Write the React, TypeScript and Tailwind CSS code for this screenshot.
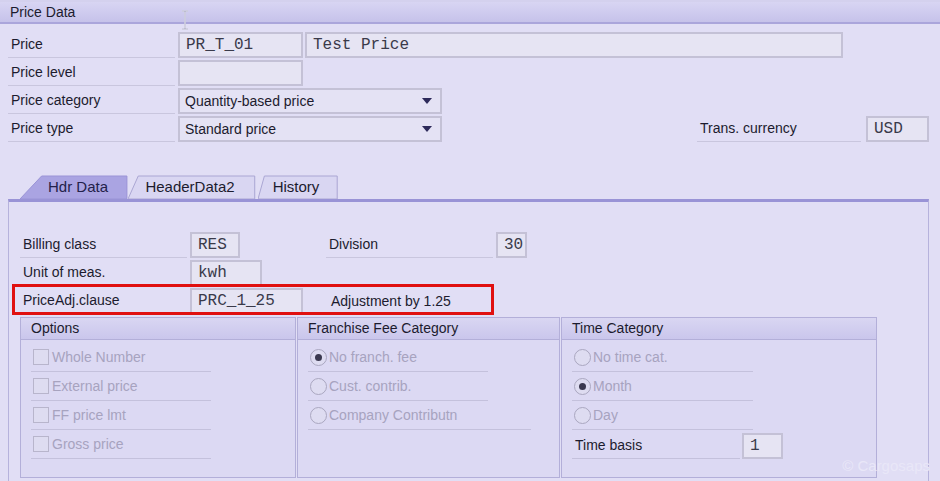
import React from 'react';

const label = 'text-[14px] text-[#1c1b2e]';
const dim = 'text-[14px] text-[#a7a3bf]';

function Box({ w, value, mono = true }: { w: string; value?: string; mono?: boolean }) {
  return (
    <div
      className={`${w} h-[26px] flex items-center px-[6px] bg-[#e6e4f3] border-2 border-[#c4c1d6] ${
        mono ? "font-['Liberation_Mono',monospace] text-[16px] text-[#3a3a4a]" : 'text-[14px] text-[#1c1b2e]'
      }`}
    >
      {value}
    </div>
  );
}

function Select({ value }: { value: string }) {
  return (
    <div className="w-[264px] h-[26px] flex items-center justify-between pl-[5px] pr-[7px] bg-[#e4e2f4] border-2 border-[#c4c1d6]">
      <span className="text-[14px] text-[#1c1b2e]">{value}</span>
      <svg width="12" height="8" viewBox="0 0 12 8">
        <path d="M1 1 L11 1 L6 7 Z" fill="#2d2a5a" />
      </svg>
    </div>
  );
}

function Row({ text, children, lw = 'w-[167px]' }: { text: string; children?: React.ReactNode; lw?: string }) {
  return (
    <div className="flex items-end h-[28px]">
      <div className={`${lw} h-[26px] flex items-center pl-[3px] border-b border-[#c9c6de] mr-[3px]`}>
        <span className={label}>{text}</span>
      </div>
      {children}
    </div>
  );
}

function Check({ text }: { text: string }) {
  return (
    <div className="w-[180px] h-[29px] flex items-center gap-[3px] pl-[2px] border-b border-[#c4c1dc]">
      <span className="w-[16px] h-[16px] border border-[#b8b5cc] bg-[#dedcf1]" />
      <span className={dim}>{text}</span>
    </div>
  );
}

function Radio({ text, on, w = 'w-[180px]' }: { text: string; on?: boolean; w?: string }) {
  return (
    <div className={`${w} h-[29px] flex items-center gap-[2px] pl-[2px] border-b border-[#c4c1dc]`}>
      <span className="w-[17px] h-[17px] rounded-full border border-[#aaa7c0] bg-[#dedcf1] flex items-center justify-center">
        {on && <span className="w-[7px] h-[7px] rounded-full bg-[#3b3950]" />}
      </span>
      <span className={dim}>{text}</span>
    </div>
  );
}

function Group({ title, w, children }: { title: string; w: string; children: React.ReactNode }) {
  return (
    <div className={`${w} h-full flex flex-col border border-[#b3afd9] bg-[#dcd9f3]`}>
      <div className="h-[22px] flex items-center pl-[10px] bg-gradient-to-b from-[#d9d6f2] to-[#cac6ec] border-b border-[#b3afd9]">
        <span className={label}>{title}</span>
      </div>
      <div className="flex flex-col pl-[10px] pt-[3px]">{children}</div>
    </div>
  );
}

function Tab({ text, active, w }: { text: string; active?: boolean; w: string }) {
  return (
    <div className={`relative ${w} h-[24px] flex items-center`}>
      <svg className="absolute inset-0" width="100%" height="24" viewBox="0 0 100 24" preserveAspectRatio="none">
        <path
          d={active ? 'M0 24 L20 1 L99 1 L99 24 Z' : 'M0 24 L8 1 L99 1 L99 24 Z'}
          fill={active ? '#aaa4e2' : '#d9d6f2'}
          stroke={active ? '#9a94d6' : '#aaa6d3'}
          strokeWidth="1"
          vectorEffect="non-scaling-stroke"
        />
      </svg>
      <span className={`relative w-full text-center text-[15px] ${active ? 'text-[#23214a] pl-[8px]' : 'text-[#1c1b2e] pr-[4px]'}`}>
        {text}
      </span>
    </div>
  );
}

export default function App() {
  return (
    <div className="relative w-[940px] h-[481px] overflow-hidden bg-[#e1def5] font-['Liberation_Sans',Arial,sans-serif]">
      <div className="h-[2px] bg-[#d4d1ee]" />
      {/* section header */}
      <div className="h-[22px] flex items-center pl-[10px] bg-gradient-to-b from-[#d8d5f3] to-[#c6c2ea] border-b-2 border-[#aaa5db]">
        <span className={label}>Price Data</span>
      </div>

      {/* header fields */}
      <div className="flex flex-col pl-[8px] pt-[6px]">
        <Row text="Price">
          <Box w="w-[125px]" value="PR_T_01" />
          <div className="w-[2px]" />
          <Box w="w-[538px]" value="Test Price" />
        </Row>
        <Row text="Price level">
          <Box w="w-[125px]" />
        </Row>
        <Row text="Price category">
          <Select value="Quantity-based price" />
        </Row>
        <Row text="Price type">
          <Select value="Standard price" />
          <div className="w-[255px]" />
          <div className="w-[164px] h-[26px] flex items-center pl-[3px] border-b border-[#c9c6de] mr-[5px]">
            <span className={label}>Trans. currency</span>
          </div>
          <Box w="w-[63px]" value="USD" />
        </Row>
      </div>

      {/* tabs */}
      <div className="flex pl-[20px] mt-[33px]">
        <Tab text="Hdr Data" active w="w-[108px]" />
        <Tab text="HeaderData2" w="w-[128px]" />
        <div className="w-[2px]" />
        <Tab text="History" w="w-[80px]" />
      </div>

      <div className="ml-[8px] w-[921px] h-[290px] border-t-[3px] border-t-[#9993d6] border-x border-x-[#b6b2dc] flex flex-col pl-[11px]">
        <div className="flex flex-col mt-[28px]">
          <div className="flex">
            <Row text="Billing class" lw="w-[167px]">
              <Box w="w-[50px]" value="RES" />
            </Row>
            <div className="w-[86px]" />
            <Row text="Division" lw="w-[167px]">
              <Box w="w-[31px]" value="30" />
            </Row>
          </div>
          <Row text="Unit of meas." lw="w-[167px]">
            <Box w="w-[72px]" value="kwh" />
          </Row>
          <Row text="PriceAdj.clause" lw="w-[167px]">
            <Box w="w-[113px]" value="PRC_1_25" />
            <div className="h-[26px] flex items-center pl-[28px]">
              <span className={label}>Adjustment by 1.25</span>
            </div>
          </Row>
        </div>

        <div className="flex h-[161px] mt-[3px] gap-[1px]">
          <Group title="Options" w="w-[276px]">
            <Check text="Whole Number" />
            <Check text="External price" />
            <Check text="FF price lmt" />
            <Check text="Gross price" />
          </Group>
          <Group title="Franchise Fee Category" w="w-[263px]">
            <Radio text="No franch. fee" on />
            <Radio text="Cust. contrib." />
            <Radio text="Company Contributn" w="w-[223px]" />
          </Group>
          <Group title="Time Category" w="w-[316px]">
            <Radio text="No time cat." w="w-[181px]" />
            <Radio text="Month" on w="w-[181px]" />
            <Radio text="Day" w="w-[181px]" />
            <div className="flex items-end h-[29px]">
              <div className="w-[168px] h-[26px] flex items-center pl-[3px] border-b border-[#c4c1dc] mr-[2px]">
                <span className={label}>Time basis</span>
              </div>
              <Box w="w-[41px]" value="1" />
            </div>
          </Group>
        </div>
      </div>

      {/* red annotation around PriceAdj.clause row */}
      <div className="absolute left-[12px] top-[284px] w-[482px] h-[31px] border-[3px] border-[#e01010]" />

      {/* text cursor */}
      <svg className="absolute left-[180px] top-[10px]" width="10" height="20" viewBox="0 0 10 20">
        <path d="M2 1 H8 M5 1 V19 M2 19 H8" stroke="#f4f3fb" strokeWidth="1.5" fill="none" />
        <path d="M2 1 H8 M5 1 V19 M2 19 H8" stroke="#8c89a8" strokeWidth="0.6" fill="none" />
      </svg>

      <span className="absolute right-[10px] bottom-[4px] text-[15px] text-[#e9e7f8]">© Cargosaps</span>
    </div>
  );
}
